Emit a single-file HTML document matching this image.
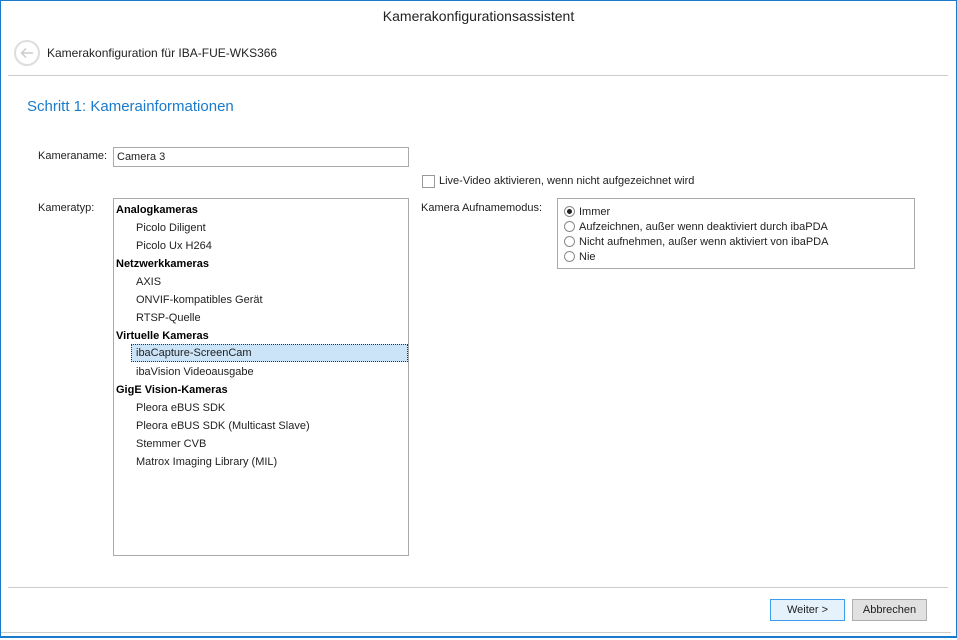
<!DOCTYPE html>
<html><head><style>
*{margin:0;padding:0;box-sizing:border-box}
body{width:957px;height:640px;background:#fff;font-family:"Liberation Sans",sans-serif;font-size:11px;color:#1e1e1e;position:relative;overflow:hidden}
.a{position:absolute;white-space:nowrap}
.row{position:absolute;height:18px;line-height:18px;white-space:nowrap}
.b{font-weight:bold;color:#000;left:2px}
.i{left:22px}
.rad{position:absolute;width:11px;height:11px;border:1px solid #8a8a8a;border-radius:50%;background:#fff}
</style></head><body>
<div class="a" style="left:0;top:0;width:957px;height:638px;border:1px solid #1979ca;border-bottom:2px solid #1979ca"></div>
<div class="a" style="left:0;top:8px;width:957px;text-align:center;font-size:14px;color:#222">Kamerakonfigurationsassistent</div>
<div class="a" style="left:14px;top:40px;width:26px;height:26px;border:2px solid #ddd;border-radius:50%"></div>
<svg class="a" style="left:14px;top:40px" width="26" height="26"><path d="M19 13H8M12 8.5L7.5 13L12 17.5" stroke="#ccc" stroke-width="1.5" fill="none"/></svg>
<div class="a" style="left:47px;top:46px;font-size:12px;color:#222">Kamerakonfiguration für IBA-FUE-WKS366</div>
<div class="a" style="left:8px;top:75px;width:940px;height:1px;background:#ccc"></div>
<div class="a" style="left:27px;top:98px;font-size:15px;color:#1a7acb">Schritt 1: Kamerainformationen</div>
<div class="a" style="left:38px;top:150px">Kameraname:</div>
<div class="a" style="left:113px;top:147px;width:296px;height:20px;border:1px solid #aaa;padding:2px 3px;line-height:15px">Camera 3</div>
<div class="a" style="left:422px;top:175px;width:13px;height:13px;border:1px solid #999"></div>
<div class="a" style="left:439px;top:175px">Live-Video aktivieren, wenn nicht aufgezeichnet wird</div>
<div class="a" style="left:38px;top:202px">Kameratyp:</div>
<div class="a" style="left:113px;top:198px;width:296px;height:358px;border:1px solid #aaa">
<div class="row b" style="top:2px">Analogkameras</div>
<div class="row i" style="top:20px">Picolo Diligent</div>
<div class="row i" style="top:38px">Picolo Ux H264</div>
<div class="row b" style="top:56px">Netzwerkkameras</div>
<div class="row i" style="top:74px">AXIS</div>
<div class="row i" style="top:92px">ONVIF-kompatibles Gerät</div>
<div class="row i" style="top:110px">RTSP-Quelle</div>
<div class="row b" style="top:128px">Virtuelle Kameras</div>
<div class="row" style="top:145px;left:17px;width:277px;background:#cce4f7;border:1px dotted #333;padding-left:4px;line-height:17px">ibaCapture-ScreenCam</div>
<div class="row i" style="top:164px">ibaVision Videoausgabe</div>
<div class="row b" style="top:182px">GigE Vision-Kameras</div>
<div class="row i" style="top:200px">Pleora eBUS SDK</div>
<div class="row i" style="top:218px">Pleora eBUS SDK (Multicast Slave)</div>
<div class="row i" style="top:236px">Stemmer CVB</div>
<div class="row i" style="top:254px">Matrox Imaging Library (MIL)</div>
</div>
<div class="a" style="left:421px;top:202px">Kamera Aufnamemodus:</div>
<div class="a" style="left:557px;top:198px;width:358px;height:71px;border:1px solid #aaa"></div>
<div class="rad" style="left:564px;top:206px"><div style="position:absolute;left:2px;top:2px;width:5px;height:5px;border-radius:50%;background:#222"></div></div>
<div class="a" style="left:579px;top:206px">Immer</div>
<div class="rad" style="left:564px;top:221px"></div>
<div class="a" style="left:579px;top:221px">Aufzeichnen, außer wenn deaktiviert durch ibaPDA</div>
<div class="rad" style="left:564px;top:236px"></div>
<div class="a" style="left:579px;top:236px">Nicht aufnehmen, außer wenn aktiviert von ibaPDA</div>
<div class="rad" style="left:564px;top:251px"></div>
<div class="a" style="left:579px;top:251px">Nie</div>
<div class="a" style="left:8px;top:587px;width:940px;height:1px;background:#ccc"></div>
<div class="a" style="left:770px;top:599px;width:75px;height:22px;border:1px solid #3c9cf0;background:#e5f1fb;text-align:center;line-height:20px">Weiter &gt;</div>
<div class="a" style="left:852px;top:599px;width:75px;height:22px;border:1px solid #adadad;background:#e1e1e1;text-align:center;line-height:20px">Abbrechen</div>
<div class="a" style="left:1px;top:632px;width:950px;height:1px;background:#ccc"></div>
</body></html>
